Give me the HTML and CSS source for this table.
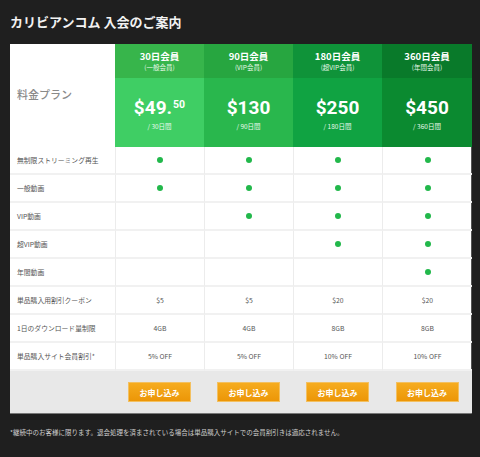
FILE: index.html
```html
<!DOCTYPE html>
<html lang="ja">
<head>
<meta charset="utf-8">
<link rel="stylesheet" href="styles.css">
</head>
<body>
<h1 class="title">カリビアンコム 入会のご案内</h1>
<div class="plans">
  <div class="plan-label">料金プラン</div>
  <div class="name c1"><b>30日会員</b><span>(一般会員)</span></div>
  <div class="name c2"><b>90日会員</b><span>(VIP会員)</span></div>
  <div class="name c3"><b>180日会員</b><span>(超VIP会員)</span></div>
  <div class="name c4"><b>360日会員</b><span>(年間会員)</span></div>
  <div class="price p1"><b>$49.<sup>50</sup></b><span>/ 30日間</span></div>
  <div class="price p2"><b>$130</b><span>/ 90日間</span></div>
  <div class="price p3"><b>$250</b><span>/ 180日間</span></div>
  <div class="price p4"><b>$450</b><span>/ 360日間</span></div>

  <div class="lbl">無制限ストリーミング再生</div><div class="cell"><i class="dot"></i></div><div class="cell"><i class="dot"></i></div><div class="cell"><i class="dot"></i></div><div class="cell"><i class="dot"></i></div>
  <div class="lbl">一般動画</div><div class="cell"><i class="dot"></i></div><div class="cell"><i class="dot"></i></div><div class="cell"><i class="dot"></i></div><div class="cell"><i class="dot"></i></div>
  <div class="lbl">VIP動画</div><div class="cell"></div><div class="cell"><i class="dot"></i></div><div class="cell"><i class="dot"></i></div><div class="cell"><i class="dot"></i></div>
  <div class="lbl">超VIP動画</div><div class="cell"></div><div class="cell"></div><div class="cell"><i class="dot"></i></div><div class="cell"><i class="dot"></i></div>
  <div class="lbl">年間動画</div><div class="cell"></div><div class="cell"></div><div class="cell"></div><div class="cell"><i class="dot"></i></div>
  <div class="lbl">単品購入用割引クーポン</div><div class="cell">$5</div><div class="cell">$5</div><div class="cell">$20</div><div class="cell">$20</div>
  <div class="lbl">1日のダウンロード量制限</div><div class="cell">4GB</div><div class="cell">4GB</div><div class="cell">8GB</div><div class="cell">8GB</div>
  <div class="lbl">単品購入サイト会員割引*</div><div class="cell">5% OFF</div><div class="cell">5% OFF</div><div class="cell">10% OFF</div><div class="cell">10% OFF</div>

  <div class="foot"></div>
  <div class="foot"><a class="btn">お申し込み</a></div>
  <div class="foot"><a class="btn">お申し込み</a></div>
  <div class="foot"><a class="btn">お申し込み</a></div>
  <div class="foot"><a class="btn">お申し込み</a></div>
</div>
<p class="note">*継続中のお客様に限ります。退会処理を済まされている場合は単品購入サイトでの会員割引きは適応されません。</p>
</body>
</html>
```
FILE: styles.css
```css
* { box-sizing: border-box; }
html, body { margin: 0; padding: 0; }
body {
  background: #1f1f1f;
  width: 480px;
  height: 457px;
  overflow: hidden;
  font-family: "Noto Sans CJK JP", "Noto Sans", sans-serif;
}
.title {
  margin: 0;
  padding: 13px 0 0 10px;
  height: 44px;
  color: #f2f2f2;
  font-size: 13px;
  font-weight: 700;
  line-height: 18px;
}
.plans {
  margin-left: 10px;
  width: 462px;
  display: grid;
  grid-template-columns: 105px 89px 89px 89px 90px;
  grid-template-rows: 34px 69px repeat(8, 28px) 42px;
  background: #fff;
  border-right: 1px solid #555;
  border-bottom: 1px solid #777;
}
.plan-label {
  grid-row: 1 / span 2;
  display: flex;
  align-items: center;
  padding-left: 7px;
  padding-bottom: 3px;
  color: #8a8a8a;
  font-size: 11px;
  font-weight: 500;
}
.name {
  display: flex;
  flex-direction: column;
  align-items: center;
  justify-content: center;
  color: #fff;
  padding-bottom: 1px;
}
.name b { display: block; font-size: 9.5px; line-height: 12px; height: 12px; font-weight: 700; }
.name span { display: block; font-size: 6.5px; line-height: 10px; height: 10px; color: #e8f8ea; }
.c1 { background: #37b54b; }
.c2 { background: #27a640; }
.c3 { background: #0f9339; }
.c4 { background: #097a2a; }
.price {
  display: flex;
  flex-direction: column;
  align-items: center;
  justify-content: center;
  color: #fff;
  padding-top: 4px;
}
.price b {
  font-family: "Roboto", "Noto Sans", sans-serif;
  font-size: 19px;
  line-height: 22px;
  font-weight: 700;
}
.price sup {
  font-size: 10.5px;
  vertical-align: top;
  position: relative;
  top: -3px;
  margin-left: 1px;
}
.price span { font-size: 6.5px; line-height: 14px; color: #eafaee; }
.p1 { background: #3fce64; }
.p2 { background: #29b74d; }
.p3 { background: #10a342; }
.p4 { background: #0b8a30; }
.lbl {
  display: flex;
  align-items: center;
  padding-left: 7px;
  font-size: 6.8px;
  color: #555;
  border-bottom: 2px solid #f1f1f1;
}
.cell {
  display: flex;
  align-items: center;
  justify-content: center;
  font-size: 6.8px;
  color: #555;
  border-left: 1px solid #ececec;
  border-bottom: 2px solid #f1f1f1;
}
.dot {
  width: 6px;
  height: 6px;
  border-radius: 50%;
  background: #22b84b;
}
.foot {
  background: #e8e8e8;
  display: flex;
  justify-content: center;
  padding-top: 11px;
}
.btn {
  display: flex;
  align-items: center;
  justify-content: center;
  width: 63px;
  height: 20px;
  background: linear-gradient(#f6ac1f, #ec9607);
  border: 1px solid #f3c060;
  color: #fff;
  font-size: 8px;
  font-weight: 700;
}
.note {
  margin: 0;
  padding: 13px 0 0 10px;
  color: #cfcfcf;
  font-size: 6.5px;
  line-height: 10px;
}
```
